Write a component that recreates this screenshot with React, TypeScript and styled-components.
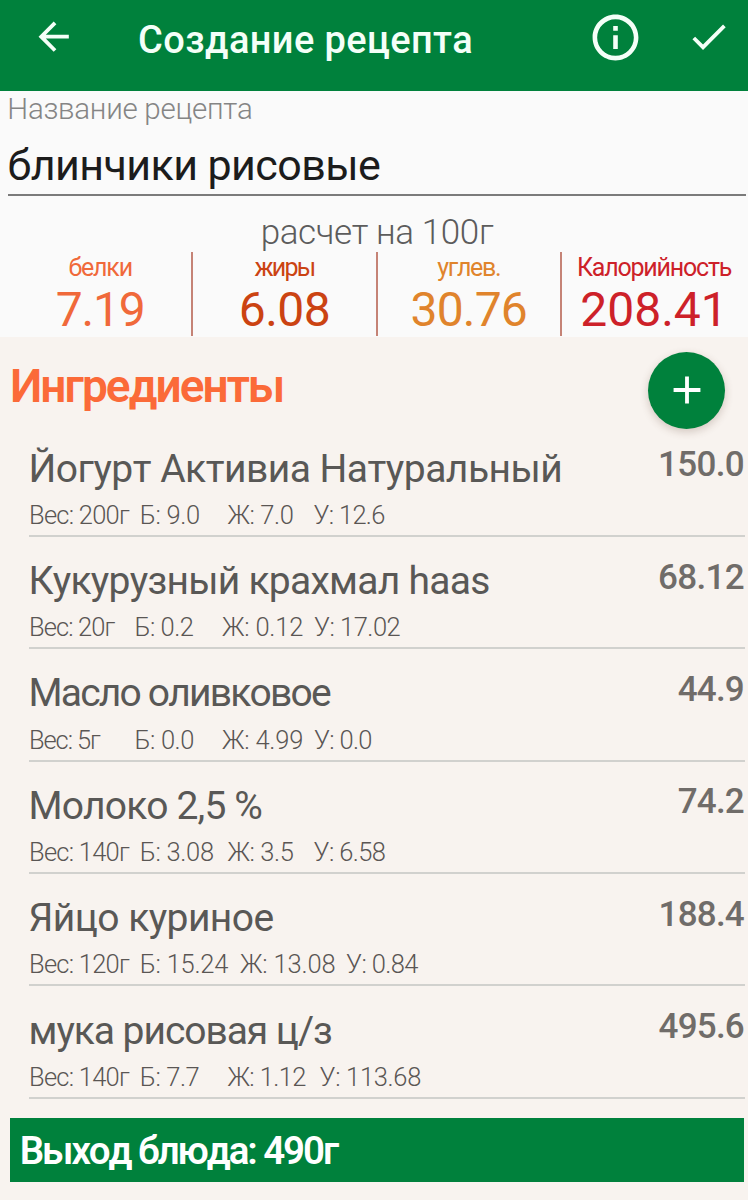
import React from "react";
import styled, { createGlobalStyle } from "styled-components";

const GREEN = "#00813c";

const GlobalStyle = createGlobalStyle`
  * { box-sizing: border-box; }
  body {
    margin: 0;
    background: #f8f3ef;
    font-family: Roboto, "Noto Sans", sans-serif;
    font-kerning: none;
  }
`;

const Screen = styled.div`
  width: 748px;
  height: 1200px;
  overflow: hidden;
  background: #f8f3ef;
`;

const AppBar = styled.header`
  display: flex;
  align-items: flex-start;
  height: 90.5px;
  padding: 0 17px 0 31.2px;
  background: ${GREEN};
`;

const BarIcon = styled.svg<{ $size: number; $top: number; $left?: number }>`
  flex: none;
  width: ${(p) => p.$size}px;
  height: ${(p) => p.$size}px;
  margin-top: ${(p) => p.$top}px;
  margin-left: ${(p) => p.$left ?? 0}px;
  fill: #f4fff8;
`;

const BarTitle = styled.h1`
  flex: 1;
  margin: 17.5px 0 0 61.5px;
  font-size: 38px;
  font-weight: 500;
  line-height: 44px;
  letter-spacing: 0.38px;
  white-space: nowrap;
  color: #f4fff8;
`;

const Summary = styled.section`
  height: 246px;
  background: #fafafa;
`;

const FieldLabel = styled.div`
  padding: 1px 0 0 7.3px;
  font-size: 29.5px;
  font-weight: 300;
  line-height: 34px;
  letter-spacing: -0.28px;
  color: #858585;
`;

const FieldValue = styled.div`
  margin: 14.7px 2px 0 8px;
  padding-bottom: 3.4px;
  border-bottom: 2px solid #7b7b7b;
  font-size: 43px;
  line-height: 50px;
  letter-spacing: -0.58px;
  text-indent: -0.5px;
  color: #1c1c1c;
`;

const PerHundred = styled.div`
  margin-top: 17.2px;
  padding-left: 6px;
  font-size: 35px;
  font-weight: 300;
  line-height: 40px;
  letter-spacing: -0.4px;
  text-align: center;
  color: #5c5c5c;
`;

const Stats = styled.div`
  display: grid;
  grid-template-columns: repeat(4, 184.3px);
  height: 84.4px;
  margin: -1px 0 0 9px;
`;

const Stat = styled.div<{ $color: string }>`
  text-align: center;
  white-space: nowrap;
  color: ${(p) => p.$color};
  border-right: 2px solid #c58376;
  &:last-child { border-right: 0; }
`;

const StatLabel = styled.div<{ $track: number }>`
  margin-top: 0.9px;
  font-size: 25px;
  line-height: 30px;
  letter-spacing: ${(p) => p.$track}px;
`;

const StatValue = styled.div<{ $track: number }>`
  margin-top: 1.2px;
  font-size: 48px;
  line-height: 52px;
  letter-spacing: ${(p) => p.$track}px;
`;

const SectionHead = styled.div`
  display: flex;
  justify-content: space-between;
  height: 87.9px;
  padding: 15.3px 23px 0 10px;
`;

const SectionTitle = styled.h2`
  margin: 7px 0 0;
  font-size: 46px;
  font-weight: 600;
  line-height: 54px;
  letter-spacing: -1.95px;
  color: #fb6a38;
`;

const AddButton = styled.button`
  display: grid;
  place-items: center;
  width: 77px;
  height: 77px;
  padding: 0;
  border: 0;
  border-radius: 50%;
  background: ${GREEN};
  box-shadow: 0 3px 9px rgba(90, 60, 40, 0.24);
  svg { width: 46px; height: 46px; fill: #fff; }
`;

const List = styled.ul`
  margin: 0 3.5px 0 29px;
  padding: 0;
  list-style: none;
`;

const Item = styled.li`
  display: flex;
  justify-content: space-between;
  height: 112.4px;
  border-bottom: 2px solid #d1d1ce;
  white-space: nowrap;
`;

const ItemName = styled.div<{ $track: number }>`
  margin-top: 21.2px;
  font-size: 39px;
  line-height: 46px;
  letter-spacing: ${(p) => p.$track}px;
  text-indent: -0.5px;
  color: #595856;
`;

const ItemValue = styled.div<{ $track: number }>`
  margin: 20.9px 0.6px 0 0;
  font-size: 35px;
  font-weight: 500;
  line-height: 40px;
  letter-spacing: ${(p) => p.$track}px;
  color: #706c69;
`;

const Facts = styled.div<{ $cols: number[] }>`
  display: grid;
  grid-template-columns: ${(p) => p.$cols.map((c) => `${c}px`).join(" ")} auto;
  margin-top: 8.3px;
  font-size: 25.5px;
  font-weight: 300;
  line-height: 30px;
  color: #5a5654;
`;

const Fact = styled.span<{ $track: number }>`
  letter-spacing: ${(p) => p.$track}px;
`;

const Footer = styled.footer`
  height: 63.5px;
  margin: 19.3px 3.8px 0 10px;
  padding: 10.6px 0 0 9.7px;
  background: ${GREEN};
  color: #fff;
  font-size: 38.5px;
  font-weight: 600;
  line-height: 44px;
  letter-spacing: -2.08px;
`;

type StatData = { label: string; value: string; color: string; lt: number; vt: number };

const stats: StatData[] = [
  { label: "белки", value: "7.19", color: "#f0693a", lt: -1.2, vt: -1.2 },
  { label: "жиры", value: "6.08", color: "#cb4312", lt: -1.8, vt: -0.6 },
  { label: "углев.", value: "30.76", color: "#e0842c", lt: -1.3, vt: -0.8 },
  { label: "Калорийность", value: "208.41", color: "#cd2129", lt: -1.2, vt: 0 },
];

type ItemData = {
  name: string;
  track: number;
  value: string;
  vt: number;
  cols: number[];
  facts: [string, number][];
};

const items: ItemData[] = [
  { name: "Йогурт Активиа Натуральный", track: -0.51, value: "150.0", vt: -0.7, cols: [110.8, 87.7, 86],
    facts: [["Вес: 200г", -0.75], ["Б: 9.0", -0.3], ["Ж: 7.0", -0.4], ["У: 12.6", -0.7]] },
  { name: "Кукурузный крахмал haas", track: -0.74, value: "68.12", vt: -0.7, cols: [105.5, 87.5, 92],
    facts: [["Вес: 20г", -0.9], ["Б: 0.2", -0.5], ["Ж: 0.12", -0.2], ["У: 17.02", -0.5]] },
  { name: "Масло оливковое", track: -1.8, value: "44.9", vt: -0.8, cols: [105.5, 87.5, 92],
    facts: [["Вес: 5г", -1.1], ["Б: 0.0", -0.4], ["Ж: 4.99", -0.2], ["У: 0.0", -0.7]] },
  { name: "Молоко 2,5 %", track: -0.86, value: "74.2", vt: -0.8, cols: [110.8, 87.7, 86],
    facts: [["Вес: 140г", -0.75], ["Б: 3.08", -0.3], ["Ж: 3.5", -0.4], ["У: 6.58", -0.6]] },
  { name: "Яйцо куриное", track: -0.55, value: "188.4", vt: -0.8, cols: [110.8, 100.2, 106],
    facts: [["Вес: 120г", -0.75], ["Б: 15.24", -0.25], ["Ж: 13.08", -0.15], ["У: 0.84", -0.6]] },
  { name: "мука рисовая ц/з", track: -1.05, value: "495.6", vt: -0.8, cols: [110.8, 87.7, 92],
    facts: [["Вес: 140г", -0.75], ["Б: 7.7", -0.4], ["Ж: 1.12", -0.6], ["У: 113.68", -0.32]] },
];

export default function App() {
  return (
    <Screen>
      <GlobalStyle />
      <AppBar>
        <BarIcon viewBox="0 0 24 24" $size={45.4} $top={14.3}>
          <path d="M20 11H7.83l5.59-5.59L12 4l-8 8 8 8 1.41-1.41L7.83 13H20v-2z" />
        </BarIcon>
        <BarTitle>Создание рецепта</BarTitle>
        <BarIcon viewBox="0 0 24 24" $size={55} $top={9.6}>
          <path d="M11 7h2v2h-2zm0 4h2v6h-2zm1-9C6.48 2 2 6.48 2 12s4.48 10 10 10 10-4.48 10-10S17.52 2 12 2zm0 18c-4.41 0-8-3.59-8-8s3.59-8 8-8 8 3.59 8 8-3.59 8-8 8z" />
        </BarIcon>
        <BarIcon viewBox="0 0 24 24" $size={45.4} $top={14.4} $left={42.4}>
          <path d="M9 16.17 4.83 12l-1.42 1.41L9 19 21 7l-1.41-1.41z" />
        </BarIcon>
      </AppBar>
      <Summary>
        <FieldLabel>Название рецепта</FieldLabel>
        <FieldValue>блинчики рисовые</FieldValue>
        <PerHundred>расчет на 100г</PerHundred>
        <Stats>
          {stats.map((s) => (
            <Stat key={s.label} $color={s.color}>
              <StatLabel $track={s.lt}>{s.label}</StatLabel>
              <StatValue $track={s.vt}>{s.value}</StatValue>
            </Stat>
          ))}
        </Stats>
      </Summary>
      <SectionHead>
        <SectionTitle>Ингредиенты</SectionTitle>
        <AddButton aria-label="Добавить">
          <svg viewBox="0 0 24 24">
            <path d="M19 13h-6v6h-2v-6H5v-2h6V5h2v6h6v2z" />
          </svg>
        </AddButton>
      </SectionHead>
      <List>
        {items.map((item) => (
          <Item key={item.name}>
            <div>
              <ItemName $track={item.track}>{item.name}</ItemName>
              <Facts $cols={item.cols}>
                {item.facts.map(([text, track]) => (
                  <Fact key={text} $track={track}>{text}</Fact>
                ))}
              </Facts>
            </div>
            <ItemValue $track={item.vt}>{item.value}</ItemValue>
          </Item>
        ))}
      </List>
      <Footer>Выход блюда: 490г</Footer>
    </Screen>
  );
}
